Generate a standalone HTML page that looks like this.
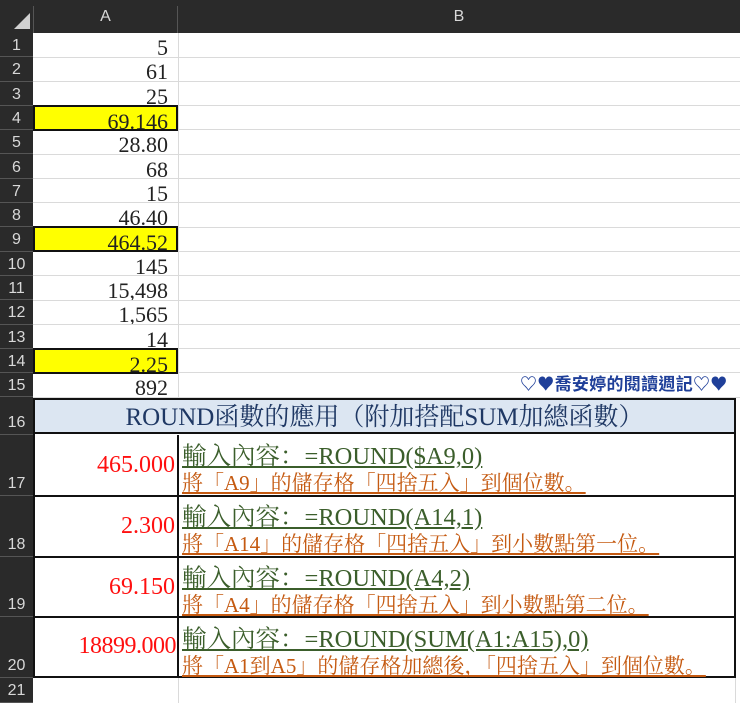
<!DOCTYPE html>
<html><head><meta charset="utf-8"><style>
*{margin:0;padding:0;box-sizing:border-box}
body{width:740px;height:703px;overflow:hidden;background:#fff;position:relative;font-family:"Liberation Serif","Noto Serif CJK SC",serif}
.abs{position:absolute}
.hdr{background:#2a2a2a}
.rn{position:absolute;left:0;width:33px;color:#d8d8d8;font:16px "Liberation Sans",sans-serif;text-align:center;background:#2a2a2a;border-bottom:1px solid #555}
.hl{position:absolute;left:33px;width:707px;height:1px;background:#dadada}
.va{position:absolute;left:33px;width:145px;text-align:right;padding-right:10px;font-size:22px;color:#222;line-height:26px;overflow:hidden}
.yel{background:#ffff00;border:2px solid #111}
.g{color:#3b5e2b;text-decoration:underline;font-size:24.5px;white-space:nowrap}
.o{color:#c55a11;text-decoration:underline;font-size:21px;white-space:nowrap}
.red{color:#ff1010;font-size:24px}
</style></head><body>
<div class="abs hdr" style="left:0;top:0;width:740px;height:33px"></div>
<div class="abs" style="left:14px;top:13px;width:0;height:0;border-left:16px solid transparent;border-bottom:16px solid #d0d0d0"></div>
<div class="abs" style="left:33px;top:6px;width:145px;text-align:center;color:#d8d8d8;font:16px 'Liberation Sans',sans-serif;border-left:1px solid #555;border-right:1px solid #555;height:27px;line-height:22px">A</div>
<div class="abs" style="left:178px;top:6px;width:562px;text-align:center;color:#d8d8d8;font:16px 'Liberation Sans',sans-serif;line-height:22px">B</div>
<div class="abs" style="left:0;top:33px;width:33px;height:670px;background:#2a2a2a"></div>
<div class="abs" style="left:178px;top:33px;width:1px;height:365px;background:#dadada"></div>
<div class="abs" style="left:178px;top:678px;width:1px;height:25px;background:#dadada"></div>
<div class="abs" style="left:735px;top:678px;width:1px;height:25px;background:#dadada"></div>

<div id="rows"></div>
<script>
var vals=["5","61","25","69.146","28.80","68","15","46.40","464.52","145","15,498","1,565","14","2.25","892"];
var h="";
for(var i=0;i<15;i++){var t=33+i*24.3;
h+='<div class="rn" style="top:'+t+'px;height:24.3px;line-height:26px">'+(i+1)+'</div>';
h+='<div class="hl" style="top:'+(t+23.5)+'px"></div>';
var y=(i==3||i==8||i==13);
h+='<div class="va'+(y?' yel':'')+'" style="top:'+(t+(y?-1:0))+'px;height:'+(y?26:24)+'px;'+(y?'padding-right:8px;line-height:30px;':'line-height:30px;')+'">'+vals[i]+'</div>';}
var tops=[398,435,496,557,617,678],hs=[37,61,61,60,61,25];
for(var j=0;j<6;j++){h+='<div class="rn" style="top:'+tops[j]+'px;height:'+hs[j]+'px;line-height:'+(hs[j]*2-24)+'px">'+(16+j)+'</div>';}
document.getElementById('rows').innerHTML=h;
</script>

<div class="abs" style="left:520px;top:370px;font:bold 17px 'Noto Sans CJK TC',sans-serif;color:#1f3f99;letter-spacing:0.3px;white-space:nowrap">♡♥喬安婷的閱讀週記♡♥</div>

<div class="abs" style="left:33px;top:398px;width:703px;height:280px;border:2px solid #111"></div>
<div class="abs" style="left:35px;top:400px;width:699px;height:34px;background:#dce6f2;border-bottom:2px solid #111;text-align:center;color:#1f3864;font-size:25px;line-height:36px;white-space:nowrap">ROUND函數的應用（附加搭配SUM加總函數）</div>
<div class="abs" style="left:177px;top:435px;width:2px;height:243px;background:#111"></div>
<div class="abs" style="left:35px;top:495px;width:699px;height:2px;background:#111"></div>
<div class="abs" style="left:35px;top:556px;width:699px;height:2px;background:#111"></div>
<div class="abs" style="left:35px;top:616px;width:699px;height:2px;background:#111"></div>

<div class="abs red" style="left:35px;top:452px;width:140px;text-align:right">465.000</div>
<div class="abs red" style="left:35px;top:513px;width:140px;text-align:right">2.300</div>
<div class="abs red" style="left:35px;top:574px;width:140px;text-align:right">69.150</div>
<div class="abs red" style="left:35px;top:633px;width:141px;text-align:right;letter-spacing:-0.5px">18899.000</div>

<div class="abs g" style="left:182px;top:437px">輸入內容：=ROUND($A9,0)</div>
<div class="abs o" style="left:182px;top:467px">將「A9」的儲存格「四捨五入」到個位數。</div>
<div class="abs g" style="left:182px;top:498px">輸入內容：=ROUND(A14,1)</div>
<div class="abs o" style="left:182px;top:528px">將「A14」的儲存格「四捨五入」到小數點第一位。</div>
<div class="abs g" style="left:182px;top:559px">輸入內容：=ROUND(A4,2)</div>
<div class="abs o" style="left:182px;top:589px">將「A4」的儲存格「四捨五入」到小數點第二位。</div>
<div class="abs g" style="left:182px;top:620px">輸入內容：=ROUND(SUM(A1:A15),0)</div>
<div class="abs o" style="left:182px;top:650px">將「A1到A5」的儲存格加總後，「四捨五入」到個位數。</div>
</body></html>
